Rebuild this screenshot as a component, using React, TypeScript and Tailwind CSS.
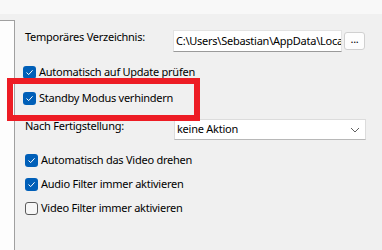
import React from 'react';

const Check = ({ checked }: { checked: boolean }) =>
  checked ? (
    <span className="flex h-[13px] w-[13px] shrink-0 items-center justify-center rounded-[3px] bg-[#005fb8]">
      <svg width="9" height="9" viewBox="0 0 9 9" fill="none">
        <path d="M1.8 4.8 L3.7 6.6 L7.3 2.6" stroke="#ffffff" strokeWidth="1" strokeLinecap="round" strokeLinejoin="round" />
      </svg>
    </span>
  ) : (
    <span className="h-[13px] w-[13px] shrink-0 rounded-[3px] border border-[#5a5a5a] bg-[#f6f6f6]" />
  );

const CheckRow = ({ label, checked, className = '' }: { label: string; checked: boolean; className?: string }) => (
  <div className={`flex h-[16px] items-center gap-[3px] ${className}`}>
    <Check checked={checked} />
    <span className="leading-[16px]">{label}</span>
  </div>
);

export default function App() {
  return (
    <div
      className="relative h-[250px] w-[382px] overflow-hidden bg-[#f0f0f0] text-[11px] tracking-[-0.25px] text-black"
      style={{ fontFamily: '"Noto Sans", "Segoe UI", sans-serif' }}
    >
      <div className="h-[14px] bg-[#f8f8f8]" />
      <div className="flex h-[236px]">
        <div className="mt-[6px] w-[15px] shrink-0 border-t border-r border-[#a0a0a0] bg-[#fdfdfd]" />
        <div className="flex flex-1 flex-col pl-[8px]">
          <div className="mt-[15px] flex items-start">
            <span className="ml-[2px] w-[148px] leading-[16px]">Temporäres Verzeichnis:</span>
            <div className="mt-[1px] flex h-[22px] w-[169px] items-center overflow-hidden whitespace-nowrap border border-[#e3e3e3] border-b-[#9a9a9a] bg-white pl-[2px]">
              <span className="overflow-hidden">C:\Users\Sebastian\AppData\Loca</span>
            </div>
            <div className="ml-[2px] mt-[3px] flex h-[18px] w-[21px] items-center justify-center rounded-[3px] border border-[#d0d0d0] bg-[#fdfdfd] pb-[3px]">
              ...
            </div>
          </div>
          <CheckRow className="mt-[12px]" checked label="Automatisch auf Update prüfen" />
          <CheckRow className="mt-[10px]" checked label="Standby Modus verhindern" />
          <div className="mt-[13px] flex items-start">
            <span className="ml-[2px] -mt-[1px] w-[149px] leading-[16px]">Nach Fertigstellung:</span>
            <div className="flex h-[21px] w-[192px] items-center justify-between border border-[#dcdcdc] border-b-[#b8b8b8] bg-white pl-[2px] pr-[5px]">
              <span>keine Aktion</span>
              <svg width="10" height="6" viewBox="0 0 10 6" fill="none">
                <path d="M1 1 L5 5 L9 1" stroke="#606060" strokeWidth="1" />
              </svg>
            </div>
          </div>
          <CheckRow className="ml-[2px] mt-[12px]" checked label="Automatisch das Video drehen" />
          <CheckRow className="ml-[2px] mt-[8px]" checked label="Audio Filter immer aktivieren" />
          <CheckRow className="ml-[2px] mt-[8px]" checked={false} label="Video Filter immer aktivieren" />
        </div>
      </div>
      <div className="absolute left-[7px] top-[78px] h-[43px] w-[193px] border-[6px] border-[#ed1c24]" />
    </div>
  );
}
